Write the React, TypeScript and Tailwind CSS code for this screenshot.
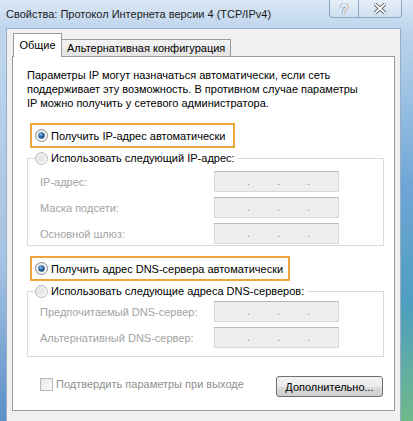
import React, { useId } from "react";

const Radio: React.FC<{ checked?: boolean }> = ({ checked }) => {
  const id = useId().replace(/:/g, "");
  return (
    <svg width="13" height="13" viewBox="0 0 13 13" className="shrink-0">
      <defs>
        <linearGradient id={`r${id}`} x1="0" y1="0" x2="1" y2="1">
          <stop offset="0" stopColor="#e4e4e4" />
          <stop offset="1" stopColor="#ffffff" />
        </linearGradient>
        <radialGradient id={`d${id}`} cx="0.4" cy="0.35" r="0.7">
          <stop offset="0" stopColor="#8fc0ec" />
          <stop offset="0.5" stopColor="#2c67a8" />
          <stop offset="1" stopColor="#173f6e" />
        </radialGradient>
      </defs>
      <circle
        cx="6.5"
        cy="6.5"
        r="6"
        fill={`url(#r${id})`}
        stroke={checked ? "#8a8a8a" : "#b8b8b8"}
      />
      {checked ? (
        <circle cx="6.5" cy="6.5" r="3.2" fill={`url(#d${id})`} />
      ) : (
        <circle cx="6.5" cy="6.5" r="3.6" fill="#e6e6e6" />
      )}
    </svg>
  );
};

const IpBox: React.FC = () => (
  <div className="flex h-[21px] w-[125px] items-center border border-[#d9d9d9] border-t-[#b9b9b9] bg-[#eeeeee] pl-[32px] text-[#8a8a8a]">
    <span className="w-[30px] leading-none">.</span>
    <span className="w-[30px] leading-none">.</span>
    <span className="leading-none">.</span>
  </div>
);

const FieldRow: React.FC<{ label: string }> = ({ label }) => (
  <div className="grid grid-cols-[174px_125px] items-center">
    <span className="text-[#a3a3a3]">{label}</span>
    <IpBox />
  </div>
);

export default function App() {
  return (
    <div className="flex h-[421px] w-[413px] flex-col overflow-hidden whitespace-nowrap bg-[#bcd3ea] font-['Liberation_Sans',Arial,sans-serif] text-[11px] leading-[14px] text-black">
      {/* title bar */}
      <div className="flex h-[28px] shrink-0 items-start bg-[linear-gradient(to_bottom,#dbe8f5,#c9dcf0_60%,#bfd6ee)]">
        <span className="pl-[6px] pt-[7px] text-[11px] text-[#1b1b1b]">
          Свойства: Протокол Интернета версии 4 (TCP/IPv4)
        </span>
        <div className="ml-auto mr-[11px] flex h-[18px]">
          <div className="flex w-[30px] items-center justify-center rounded-bl-[4px] border border-t-0 border-[#8ea8c4] bg-[linear-gradient(to_bottom,#e6eff8,#cddff1)] text-[14px] font-bold text-white [text-shadow:0_0_1px_#444,0_0_1px_#444]">
            ?
          </div>
          <div className="flex w-[43px] items-center justify-center rounded-br-[4px] border border-l-0 border-t-0 border-[#8ea8c4] bg-[linear-gradient(to_bottom,#e6eff8,#cddff1)]">
            <svg width="12" height="11" viewBox="0 0 12 11">
              <path
                d="M1 1 L11 10 M11 1 L1 10"
                stroke="#4a4a4a"
                strokeWidth="3.4"
                strokeLinecap="round"
              />
              <path
                d="M1 1 L11 10 M11 1 L1 10"
                stroke="#ffffff"
                strokeWidth="1.8"
                strokeLinecap="round"
              />
            </svg>
          </div>
        </div>
      </div>

      {/* frame + client */}
      <div className="flex min-h-0 flex-1">
        <div className="w-[6px] shrink-0 bg-[linear-gradient(to_bottom,#c1d7ee,#a5c3e3_60%,#5b90c8)]" />
        <div className="min-w-0 flex-1 border-x border-t border-[#97aec6] bg-[#f0f0f0] px-[5px] pt-[4px]">
          {/* tabs */}
          <div className="flex h-[23px] items-end pl-[1px]">
            <div className="relative z-10 -mb-px flex h-[24px] w-[49px] items-start justify-center border border-b-0 border-[#9a9a9a] bg-white pt-[4px]">
              Общие
            </div>
            <div className="flex h-[17px] w-[169px] items-start border border-b-0 border-l-0 border-[#9a9a9a] bg-[linear-gradient(to_bottom,#f4f4f4,#e3e3e3)] pl-[5px] pt-[1px]">
              Альтернативная конфигурация
            </div>
          </div>

          {/* panel */}
          <div className="border border-[#9a9a9a] bg-white pb-[13px] pl-[14px] pt-[11px]">
            <p>
              Параметры IP могут назначаться автоматически, если сеть
              <br />
              поддерживает эту возможность. В противном случае параметры
              <br />
              IP можно получить у сетевого администратора.
            </p>

            <div className="ml-[3px] mt-[13px] flex h-[25px] w-[205px] items-center gap-[3px] border-2 border-[#eaa838] pl-[3px]">
              <Radio checked />
              <span>Получить IP-адрес автоматически</span>
            </div>

            <fieldset className="mt-[3px] w-[357px] border border-[#d5dde4] pb-[1px] pl-[7px]">
              <legend className="flex items-center gap-[3px] pr-[3px]">
                <Radio />
                <span>Использовать следующий IP-адрес:</span>
              </legend>
              <div className="mt-[6px] flex flex-col gap-[5px] pl-[5px]">
                <FieldRow label="IP-адрес:" />
                <FieldRow label="Маска подсети:" />
                <FieldRow label="Основной шлюз:" />
              </div>
            </fieldset>

            <div className="ml-[3px] mt-[10px] flex h-[25px] w-[260px] items-center gap-[3px] border-2 border-[#eaa838] pl-[3px]">
              <Radio checked />
              <span>Получить адрес DNS-сервера автоматически</span>
            </div>

            <fieldset className="mt-[3px] w-[357px] border border-[#d5dde4] pb-[8px] pl-[7px]">
              <legend className="flex items-center gap-[3px] pr-[3px]">
                <Radio />
                <span>Использовать следующие адреса DNS-серверов:</span>
              </legend>
              <div className="mt-[3px] flex flex-col gap-[5px] pl-[5px]">
                <FieldRow label="Предпочитаемый DNS-сервер:" />
                <FieldRow label="Альтернативный DNS-сервер:" />
              </div>
            </fieldset>

            <div className="mt-[19px] flex w-[357px] items-start">
              <div className="ml-[13px] flex items-center gap-[3px] pt-[1px]">
                <span className="h-[13px] w-[13px] border border-[#b8b8b8] bg-[linear-gradient(135deg,#e8e8e8,#fafafa)]" />
                <span className="text-[#8f8f8f]">Подтвердить параметры при выходе</span>
              </div>
              <button className="ml-auto mr-px h-[21px] w-[107px] rounded-[3px] border border-[#707070] bg-[linear-gradient(to_bottom,#f3f3f3,#ebebeb_50%,#dddddd_50%,#cfcfcf)] text-[11px]">
                Дополнительно...
              </button>
            </div>
          </div>
        </div>
        <div className="w-[12px] shrink-0 bg-[linear-gradient(to_bottom,#bed5ec,#6fa6d6_40%,#4e9ec0_70%,#6fb98a)]" />
      </div>
    </div>
  );
}
